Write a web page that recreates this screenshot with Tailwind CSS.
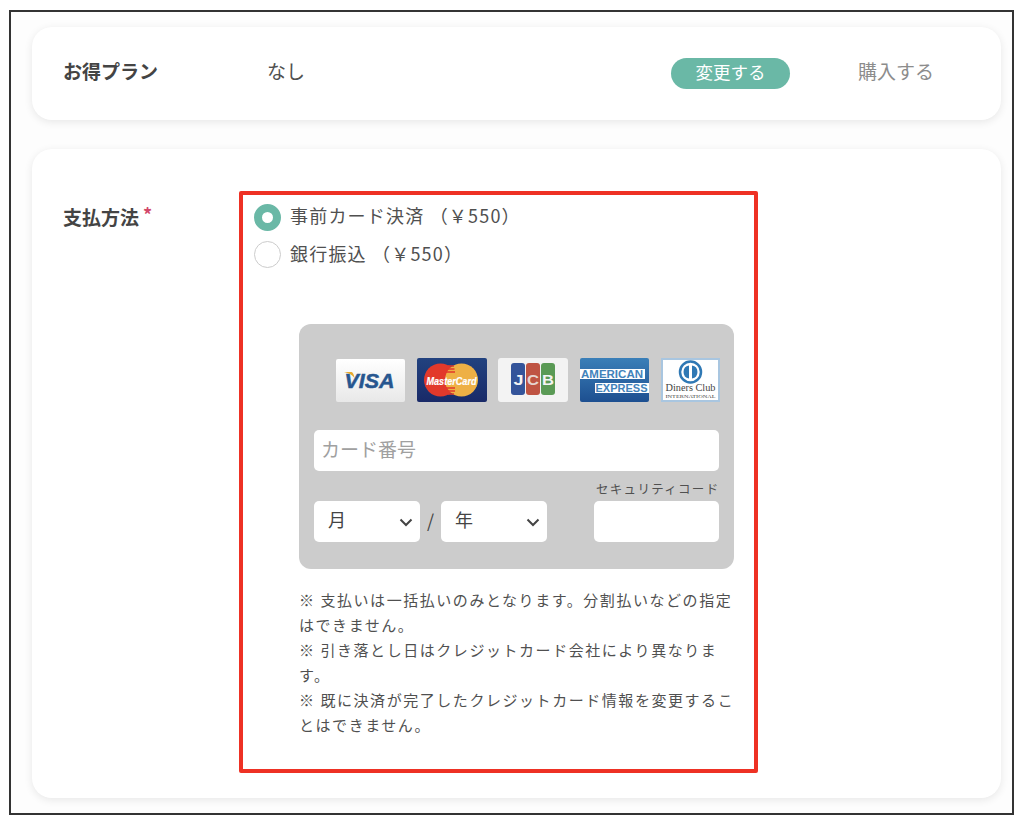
<!DOCTYPE html>
<html lang="ja">
<head>
    <meta charset="UTF-8">
    <meta name="viewport" content="width=device-width, initial-scale=1.0">
    <script src="https://cdn.jsdelivr.net/npm/@tailwindcss/browser@4"></script>
    <title>支払方法</title>
</head>
<body class="bg-white font-['Noto_Sans_CJK_JP','Noto_Sans',sans-serif] text-[#505050]">
    <div class="ml-[9px] mt-[10px] w-[1005px] h-[805px] border-2 border-[#333] bg-[#fdfdfd] pt-[15px] pl-[21px]">

        <!-- plan -->
        <div class="w-[969px] h-[93px] flex items-center rounded-[20px] bg-white shadow-[0_2px_9px_rgba(0,0,0,0.09)] pl-[31px] pr-[67px]">
            <div class="w-[204px] text-[19px] font-bold text-[#444] pb-[4px]">お得プラン</div>
            <div class="text-[19px] pb-[4px]">なし</div>
            <button class="ml-auto w-[119px] h-[31px] rounded-full bg-[#6ab8a6] text-white text-[17.5px] leading-[27px] pb-[4px]">変更する</button>
            <div class="ml-[68px] text-[19px] text-[#8c8c8c] pb-[4px]">購入する</div>
        </div>

        <!-- payment -->
        <div class="w-[969px] h-[649px] mt-[29px] flex rounded-[20px] bg-white shadow-[0_2px_9px_rgba(0,0,0,0.09)] pl-[31px] pt-[42px]">
            <div class="w-[176px] h-[40px] text-[19px] font-bold text-[#444] pt-[11px] leading-[30px]">支払方法<span class="relative -top-[3px] ml-[4px] text-[18px] leading-[0] font-bold text-[#d2476a]">*</span></div>

            <div class="w-[519px] h-[582px] border-4 border-[#ee3124] rounded-[2px] pl-[11px] pt-[9px]">
                <div class="flex items-center gap-[9px] h-[27px]">
                    <span class="w-[27px] h-[27px] rounded-full border-[8px] border-[#6ab8a6] bg-white"></span>
                    <span class="text-[18px] tracking-[1.2px] pb-[4px]">事前カード決済 （￥550）</span>
                </div>
                <div class="flex items-center gap-[9px] h-[27px] mt-[10px]">
                    <span class="w-[27px] h-[27px] rounded-full border border-[#ccc] bg-white"></span>
                    <span class="text-[18px] tracking-[1.2px] pb-[3px]">銀行振込 （￥550）</span>
                </div>

                <div class="ml-[45px] mt-[56px] w-[435px] h-[245px] rounded-[12px] bg-[#cccccc] pt-[34px] pl-[15px]">
                    <div class="flex items-center gap-[11.5px] ml-[22px] h-[44px]">
                        <svg width="69" height="43" viewBox="0 0 69 43">
                            <defs><linearGradient id="visaBg" x1="0" y1="0" x2="0" y2="1"><stop offset="0" stop-color="#ffffff"/><stop offset="1" stop-color="#e8e8e8"/></linearGradient></defs>
                            <rect width="69" height="43" rx="2" fill="url(#visaBg)"/>
                            <text x="33.5" y="29" text-anchor="middle" font-family="Liberation Sans" font-size="21" font-weight="700" font-style="italic" textLength="50" lengthAdjust="spacingAndGlyphs" fill="#27568f" stroke="#27568f" stroke-width="0.5">VISA</text>
                            <path d="M8 13h7.5q2 .5 3 6q-3-4.500-10.500-6z" fill="#e8a92c"/>
                        </svg>
                        <svg width="70" height="44" viewBox="0 0 70 44">
                            <defs><linearGradient id="mcBg" x1="0" y1="0" x2="0" y2="1"><stop offset="0" stop-color="#22427f"/><stop offset="1" stop-color="#192a68"/></linearGradient></defs>
                            <rect width="70" height="44" rx="2" fill="url(#mcBg)"/>
                            <circle cx="23.500" cy="22" r="16.500" fill="#e2392b"/>
                            <circle cx="44.500" cy="22" r="16.500" fill="#eeb045"/>
                            <path d="M31 8h6M29.500 11h8M29 14h9M29 30h9M30 33h8M31 36h6" stroke="#e2392b" stroke-width="1.500"/>
                            <text x="34.500" y="26.500" text-anchor="middle" font-family="Liberation Sans" font-size="11" font-weight="700" font-style="italic" textLength="50" lengthAdjust="spacingAndGlyphs" fill="#fff" stroke="#fff" stroke-width="0.2">MasterCard</text>
                        </svg>
                        <svg width="70" height="44" viewBox="0 0 70 44">
                            <rect width="70" height="44" rx="3" fill="#f3f3f3"/>
                            <rect x="13" y="5" width="14" height="32" rx="3" fill="#34549a"/>
                            <rect x="28" y="5" width="14" height="32" rx="3" fill="#bf5443"/>
                            <rect x="43" y="5" width="14" height="32" rx="3" fill="#5a9a55"/>
                            <text x="20.500" y="27" text-anchor="middle" font-family="Liberation Sans" font-size="14" font-weight="700" textLength="10" lengthAdjust="spacingAndGlyphs" fill="#f4f4f4">J</text>
                            <text x="35" y="27" text-anchor="middle" font-family="Liberation Sans" font-size="14" font-weight="700" textLength="12" lengthAdjust="spacingAndGlyphs" fill="#e6d4cf">C</text>
                            <text x="50" y="27" text-anchor="middle" font-family="Liberation Sans" font-size="14" font-weight="700" textLength="12" lengthAdjust="spacingAndGlyphs" fill="#f4f4f4">B</text>
                        </svg>
                        <svg width="69" height="44" viewBox="0 0 69 44">
                            <defs><linearGradient id="amexBg" x1="0" y1="0" x2="0" y2="1"><stop offset="0" stop-color="#3a7fb8"/><stop offset="1" stop-color="#1d4f90"/></linearGradient></defs>
                            <rect width="69" height="44" rx="2" fill="url(#amexBg)"/>
                            <rect x="0" y="11" width="65" height="10" fill="#fff"/>
                            <rect x="15" y="25" width="54" height="10" fill="#fff"/>
                            <text x="32" y="20" text-anchor="middle" font-family="Liberation Sans" font-size="11" font-weight="700" textLength="62" lengthAdjust="spacingAndGlyphs" fill="#4283bb">AMERICAN</text>
                            <text x="41.500" y="34" text-anchor="middle" font-family="Liberation Sans" font-size="11" font-weight="700" textLength="52" lengthAdjust="spacingAndGlyphs" fill="#4283bb">EXPRESS</text>
                        </svg>
                        <svg width="60" height="44" viewBox="0 0 60 44">
                            <rect x="2" y="1" width="57" height="42" fill="#fff" stroke="#a9c6e0" stroke-width="2"/>
                            <circle cx="30.500" cy="14" r="10.500" fill="none" stroke="#2f78b4" stroke-width="2.500"/>
                            <path d="M29 7.500a6.600 6.600 0 0 0 0 13zM32 7.500a6.600 6.600 0 0 1 0 13z" fill="#2f78b4"/>
                            <text x="30.500" y="33" text-anchor="middle" font-family="Liberation Serif" font-size="10.500" textLength="50" lengthAdjust="spacingAndGlyphs" fill="#444">Diners Club</text>
                            <text x="30.500" y="39.500" text-anchor="middle" font-family="Liberation Serif" font-size="4.500" textLength="50" lengthAdjust="spacingAndGlyphs" fill="#444">INTERNATIONAL</text>
                        </svg>
                    </div>

                    <input type="text" placeholder="カード番号" class="block mt-[28px] w-[405px] h-[41px] rounded-[5px] bg-white pl-[7px] pb-[4px] text-[19px] placeholder:text-[#a0a0a0]">

                    <div class="flex items-end h-[71px]">
                        <div class="relative w-[106px] h-[41px]">
                            <select class="appearance-none w-full h-full rounded-[5px] bg-white pl-[14px] pb-[4px] text-[18px] text-[#444]"><option>月</option></select>
                            <svg class="absolute right-[7px] top-[17px]" width="14" height="9" viewBox="0 0 14 9"><path d="M1.500 1.500L7 7l5.500-5.500" fill="none" stroke="#444" stroke-width="2"/></svg>
                        </div>
                        <span class="w-[21px] h-[41px] text-center text-[18px] leading-[38px] text-[#444]">/</span>
                        <div class="relative w-[106px] h-[41px]">
                            <select class="appearance-none w-full h-full rounded-[5px] bg-white pl-[14px] pb-[4px] text-[18px] text-[#444]"><option>年</option></select>
                            <svg class="absolute right-[7px] top-[17px]" width="14" height="9" viewBox="0 0 14 9"><path d="M1.500 1.500L7 7l5.500-5.500" fill="none" stroke="#444" stroke-width="2"/></svg>
                        </div>
                        <div class="ml-[47px] w-[125px]">
                            <div class="text-[12.500px] tracking-[1.3px] leading-[18px] whitespace-nowrap pl-[2px] mb-[3px]">セキュリティコード</div>
                            <input type="text" class="block w-[125px] h-[41px] rounded-[5px] bg-white">
                        </div>
                    </div>
                </div>

                <p class="ml-[45px] mt-[18px] w-[437px] text-[15px] leading-[25px] tracking-[1.55px]">
                    ※ 支払いは一括払いのみとなります。分割払いなどの指定はできません。<br>
                    ※ 引き落とし日はクレジットカード会社により異なります。<br>
                    ※ 既に決済が完了したクレジットカード情報を変更することはできません。
                </p>
            </div>
        </div>
    </div>
</body>
</html>
